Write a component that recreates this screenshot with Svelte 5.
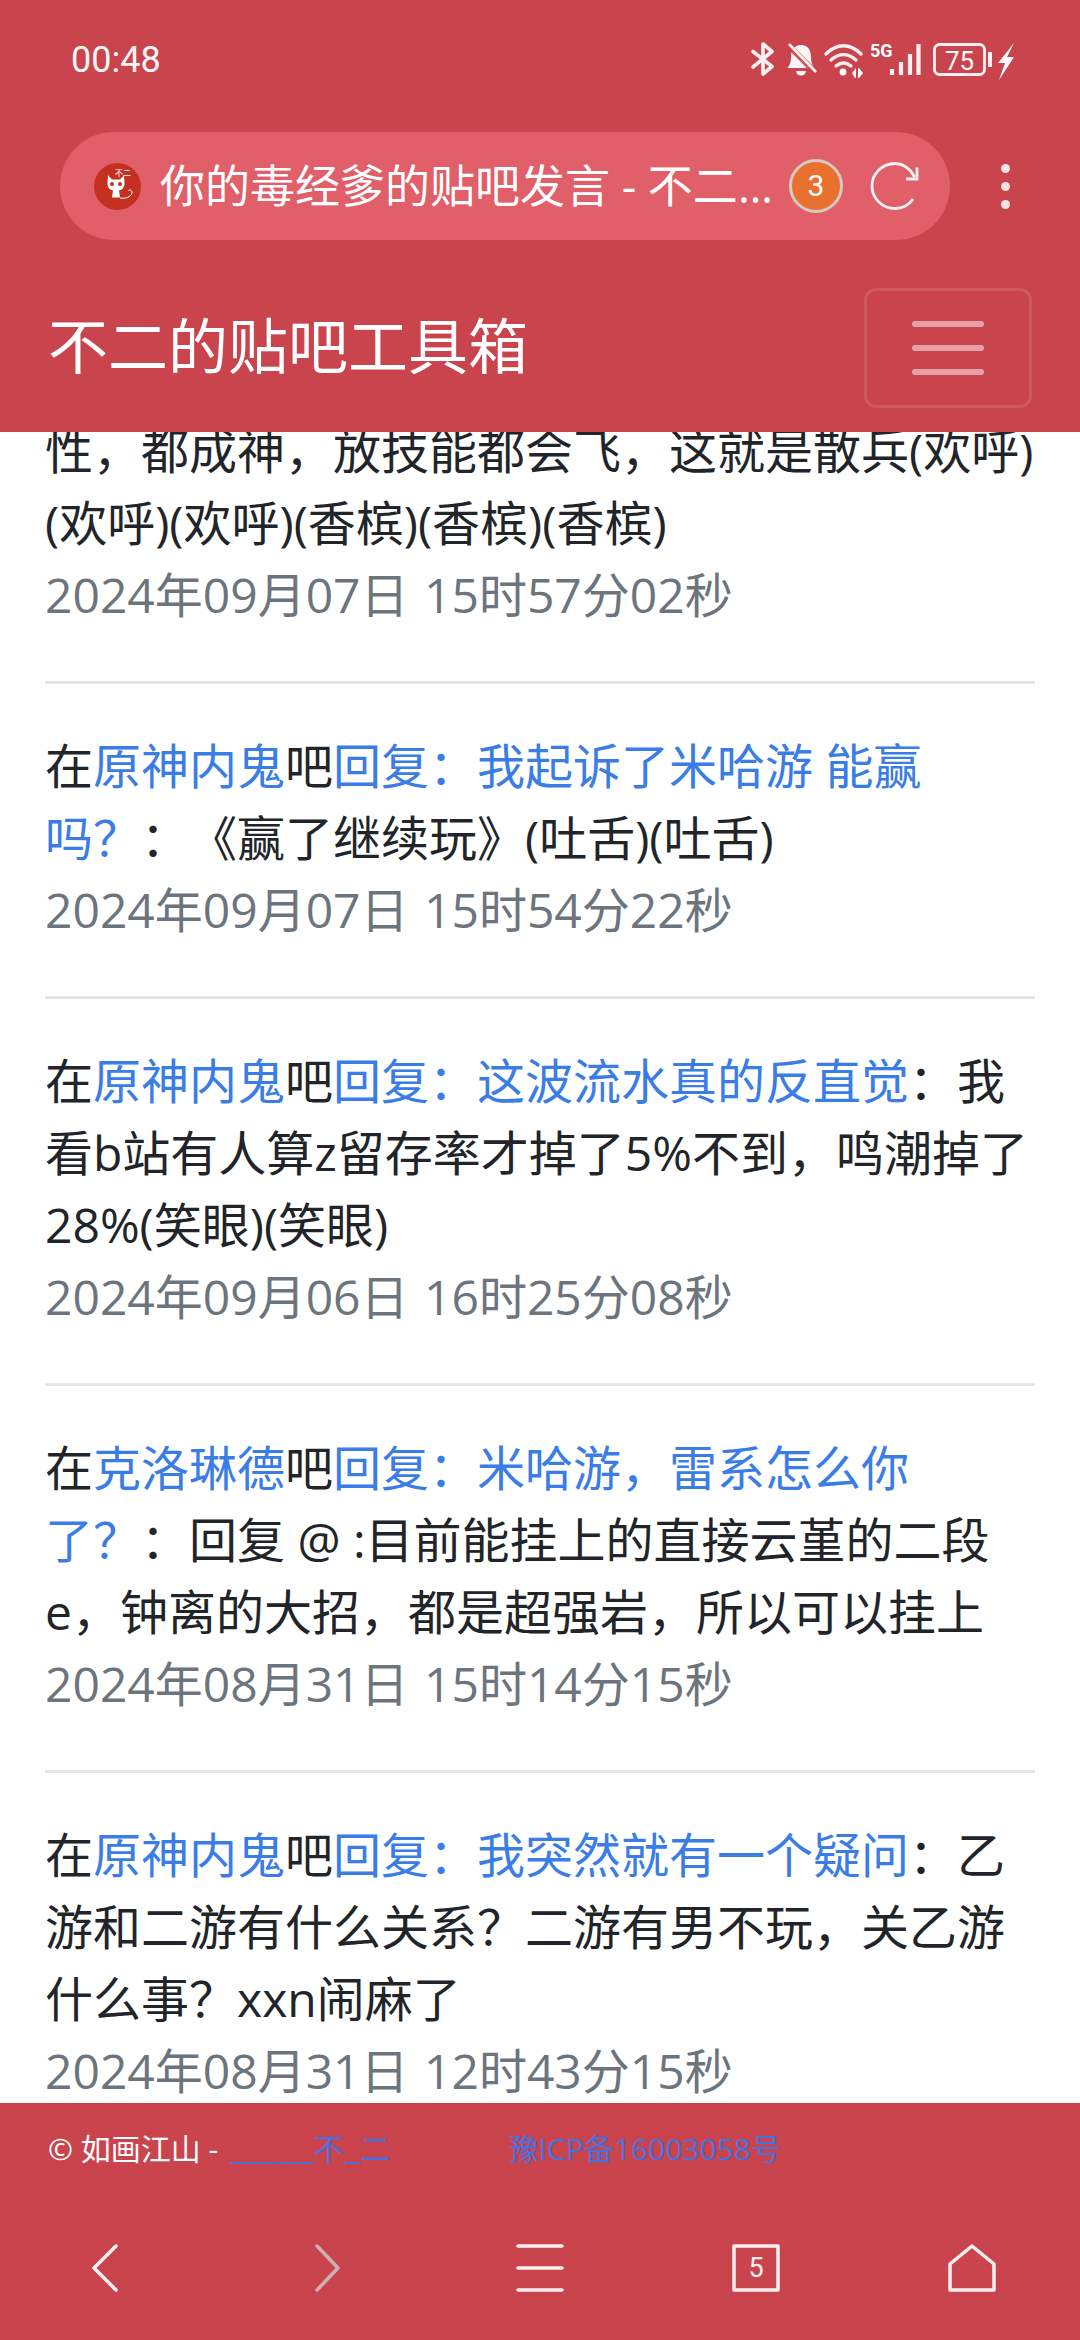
<script>
  const posts = [
    { plain: '性，都成神，放技能都会飞，这就是散兵(欢呼)(欢呼)(欢呼)(香槟)(香槟)(香槟)', date: '2024年09月07日 15时57分02秒' },
    { bar: '原神内鬼', title: '回复：我起诉了米哈游 能赢吗？', body: '：《赢了继续玩》(吐舌)(吐舌)', date: '2024年09月07日 15时54分22秒' },
    { bar: '原神内鬼', title: '回复：这波流水真的反直觉', body: '：我看b站有人算z留存率才掉了5%不到，鸣潮掉了28%(笑眼)(笑眼)', date: '2024年09月06日 16时25分08秒' },
    { bar: '克洛琳德', title: '回复：米哈游，雷系怎么你了？', body: '：回复 @ :目前能挂上的直接云堇的二段e，钟离的大招，都是超强岩，所以可以挂上', date: '2024年08月31日 15时14分15秒' },
    { bar: '原神内鬼', title: '回复：我突然就有一个疑问', body: '：乙游和二游有什么关系？二游有男不玩，关乙游什么事？xxn闹麻了', date: '2024年08月31日 12时43分15秒' }
  ];
</script>

<div class="screen">
  <header class="top">
    <div class="status">
      <span class="time">00:48</span>
      <svg class="status-icons" width="272" height="40" viewBox="748 40 272 40" fill="none" stroke="#fff" stroke-opacity=".92">
        <path d="M753 51.5 772 66.5 763 74V44L772 51.5 753 67" stroke-width="3.6" stroke-linejoin="round" stroke-linecap="round"/>
        <path d="M801 45c-7 0-10 5-10 12 0 5-1 8-3.500 11h27c-2.500-3-3.500-6-3.500-11 0-7-3-12-10-12z" fill="#fff" stroke="none" fill-opacity=".95"/>
        <path d="M796 71h10c-.5 3-2.500 4.500-5 4.500s-4.500-1.500-5-4.500z" fill="#fff" stroke="none"/>
        <path d="M787 44 815 72" stroke="#ca444d" stroke-width="6"/>
        <path d="M789 44 816 72" stroke-width="2.600"/>
        <path d="M826 54c11-11 24-11 35 0M831 60c8-7 17-7 25 0M836 66c5-4 10-4 15 0" stroke-width="3.300" stroke-linecap="round"/>
        <circle cx="843" cy="72" r="3.400" fill="#fff" stroke="none"/>
        <path d="M852 73l4-5v10h-1zM858 68h1l4 5-4 5h-1z" fill="#fff" stroke="none"/>
        <text x="870" y="57" class="five-g">5G</text>
        <path d="M892 69v6M901 62v13M910 54v21M918.500 44v31" stroke-width="4.200"/>
        <rect x="934.500" y="44.500" width="50" height="30" rx="5" stroke-width="2.800"/>
        <text x="959.500" y="70" class="batt">75</text>
        <path d="M990 52v15" stroke-width="4"/>
        <path d="M1014 43 998 63h7l-6 17 15-23h-7z" fill="#fff" stroke="none"/>
      </svg>
    </div>

    <div class="url-row">
      <div class="pill">
        <svg class="favicon" width="47" height="47" viewBox="0 0 47 47">
          <circle cx="23.500" cy="23.500" r="23.500" fill="#c4301f"/>
          <path d="M14 12l4 4.500h8l4-4.500.5 8c.5 4-2.500 7-5.500 7.500l1 7h-8l1-7c-3-.5-6-3.500-5.500-7.500z" fill="#fff"/>
          <circle cx="18" cy="21" r="2" fill="#c4301f"/>
          <circle cx="26" cy="21" r="2" fill="#c4301f"/>
          <path d="M26 35c5 1 11-1 12-5 .5-3-3-4-4-2" fill="none" stroke="#fff" stroke-width="1"/>
          <text x="21" y="13" class="fav-text">不二</text>
        </svg>
        <span class="title">你的毒经爹的贴吧发言 - 不二的贴吧工具箱</span>
        <span class="badge">3</span>
        <svg class="reload" width="50" height="50" viewBox="0 0 50 50" fill="none" stroke="#fff" stroke-opacity=".92" stroke-width="2.800">
          <path d="M44.500 16C40.500 7.500 33 2.500 25 2.500 12.500 2.500 2 12.500 2 25s10.500 22.500 23 22.500c7.500 0 14-3.500 18-9.500"/>
          <path d="M35 17.500h11V6" stroke-width="2.800" transform="translate(1 .5)"/>
        </svg>
      </div>
      <div class="kebab"><i></i><i></i><i></i></div>
    </div>

    <nav class="navbar">
      <span class="brand">不二的贴吧工具箱</span>
      <button class="toggler" aria-label="菜单"><i></i><i></i><i></i></button>
    </nav>
  </header>

  <main class="content">
    <div class="list">
      {#each posts as p, i}
        {#if i > 0}<hr />{/if}
        <article>
          <div class="text">
            {#if p.plain}{p.plain}{:else}在<a href="#a">{p.bar}</a>吧<a href="#b">{p.title}</a>{p.body}{/if}
          </div>
          <div class="date">{p.date}</div>
        </article>
      {/each}
    </div>
  </main>

  <footer class="foot">
    <span class="copy">© 如画江山 - <a href="#c">_____不_二</a></span>
    <a class="icp" href="#d">豫ICP备16003058号</a>
  </footer>

  <div class="toolbar">
    <button aria-label="后退"><svg width="48" height="48" viewBox="0 0 48 48"><path d="M32 2 10 24 32 46"/></svg></button>
    <button aria-label="前进" class="off"><svg width="48" height="48" viewBox="0 0 48 48"><path d="M17 2 38 24 17 46"/></svg></button>
    <button aria-label="菜单"><svg width="48" height="48" viewBox="0 0 48 48"><path d="M2 2H46M2 24H46M2 46H46"/></svg></button>
    <button aria-label="标签页" class="tabs"><svg width="48" height="48" viewBox="0 0 48 48"><rect x="2" y="2" width="44" height="44"/></svg><span>5</span></button>
    <button aria-label="主页"><svg width="48" height="48" viewBox="0 0 48 48"><path d="M2 20 24 2 46 20V46H2Z"/></svg></button>
  </div>
</div>

<style>
  :global(body) {
    margin: 0;
    background: #fff;
  }
  .screen {
    width: 1080px;
    height: 2340px;
    display: flex;
    flex-direction: column;
    overflow: hidden;
    font-family: "Open Sans", "Noto Sans CJK SC", sans-serif;
    text-spacing-trim: space-all;
    color: #212529;
  }
  .top {
    flex: none;
    height: 432px;
    background: #ca444d;
    color: #fff;
    display: flex;
    flex-direction: column;
  }
  .status {
    height: 118px;
    display: flex;
    justify-content: space-between;
    align-items: flex-start;
    padding: 40px 60px 0 71px;
    box-sizing: border-box;
  }
  .time {
    font-family: Roboto, sans-serif;
    font-size: 36px;
    line-height: 40px;
    font-weight: 400;
    opacity: .95;
  }
  .status-icons {
    display: block;
  }
  .five-g {
    font: 700 18px Roboto, sans-serif;
    fill: #fff;
    stroke: none;
  }
  .batt {
    font: 400 26px Roboto, sans-serif;
    fill: #fff;
    stroke: none;
    text-anchor: middle;
  }
  .url-row {
    height: 136px;
    display: flex;
    align-items: center;
    padding-left: 60px;
    box-sizing: border-box;
  }
  .pill {
    flex: none;
    width: 890px;
    height: 108px;
    border-radius: 54px;
    background: #e05f69;
    display: flex;
    align-items: center;
    padding: 0 30px 0 34px;
    box-sizing: border-box;
  }
  .favicon {
    flex: none;
    display: block;
  }
  .fav-text {
    font: 400 8px "Noto Sans CJK SC", sans-serif;
    fill: #fff;
  }
  .title {
    width: 620px;
    margin-left: 19px;
    flex: none;
    font-size: 45px;
    line-height: 60px;
    white-space: nowrap;
    overflow: hidden;
    text-overflow: ellipsis;
  }
  .badge {
    flex: none;
    width: 54px;
    height: 54px;
    margin-left: 9px;
    box-sizing: border-box;
    border: 3px solid #d6c9c4;
    border-radius: 50%;
    background: #e9712f;
    color: #fff;
    font-family: Roboto, sans-serif;
    font-size: 30px;
    line-height: 48px;
    text-align: center;
  }
  .reload {
    flex: none;
    margin-left: 27px;
    display: block;
  }
  .kebab {
    margin-left: 51px;
    display: flex;
    flex-direction: column;
    gap: 9px;
  }
  .kebab i {
    width: 9px;
    height: 9px;
    border-radius: 50%;
    background: rgba(255, 255, 255, .85);
  }
  .navbar {
    flex: 1;
    display: flex;
    justify-content: space-between;
    align-items: center;
    padding: 6px 48px 0 48px;
  }
  .brand {
    font-size: 60px;
    line-height: 90px;
  }
  .toggler {
    width: 168px;
    height: 120px;
    padding: 0;
    margin-top: 4px;
    box-sizing: border-box;
    background: none;
    border: 3px solid rgba(255, 255, 255, .1);
    border-radius: 12px;
    display: flex;
    flex-direction: column;
    align-items: center;
    justify-content: center;
    gap: 18px;
  }
  .toggler i {
    width: 72px;
    height: 6px;
    border-radius: 3px;
    background: rgba(255, 255, 255, .5);
  }
  .content {
    flex: 1;
    min-height: 0;
    overflow: hidden;
    background: #fff;
  }
  .list {
    margin-top: -17px;
    padding: 0 45px;
  }
  .text,
  .date {
    font-size: 48px;
    line-height: 72px;
  }
  .text a {
    color: #3a7de6;
    text-decoration: none;
  }
  .date {
    color: #6c757d;
    word-spacing: 3px;
  }
  hr {
    height: 3px;
    border: 0;
    margin: 50px 0 46px;
    background: #e6e6e6;
  }
  .foot {
    flex: none;
    height: 102px;
    background: #ca444d;
    display: flex;
    align-items: center;
    gap: 118px;
    padding: 0 48px 14px;
    box-sizing: border-box;
    font-size: 30px;
    color: #fff;
  }
  .foot a {
    color: #4472e0;
    text-decoration: none;
  }
  .copy a {
    font-family: "Noto Sans CJK SC", sans-serif;
    margin-left: 4px;
  }
  .toolbar {
    flex: none;
    height: 135px;
    background: #ca444d;
    display: grid;
    grid-template-columns: repeat(5, 216px);
    align-items: center;
    padding-bottom: 10px;
    box-sizing: border-box;
  }
  .toolbar button {
    position: relative;
    height: 48px;
    padding: 0;
    background: none;
    border: 0;
    display: flex;
    justify-content: center;
    align-items: center;
  }
  .toolbar svg {
    display: block;
    fill: none;
    stroke: #fff;
    stroke-opacity: .92;
    stroke-width: 3.5;
    stroke-linecap: round;
    stroke-linejoin: round;
  }
  .toolbar .off svg {
    stroke: #cdbcbc;
  }
  .tabs span {
    position: absolute;
    inset: 0;
    color: #fff;
    font-family: Roboto, sans-serif;
    font-size: 27px;
    line-height: 48px;
    text-align: center;
    opacity: .92;
  }
</style>
